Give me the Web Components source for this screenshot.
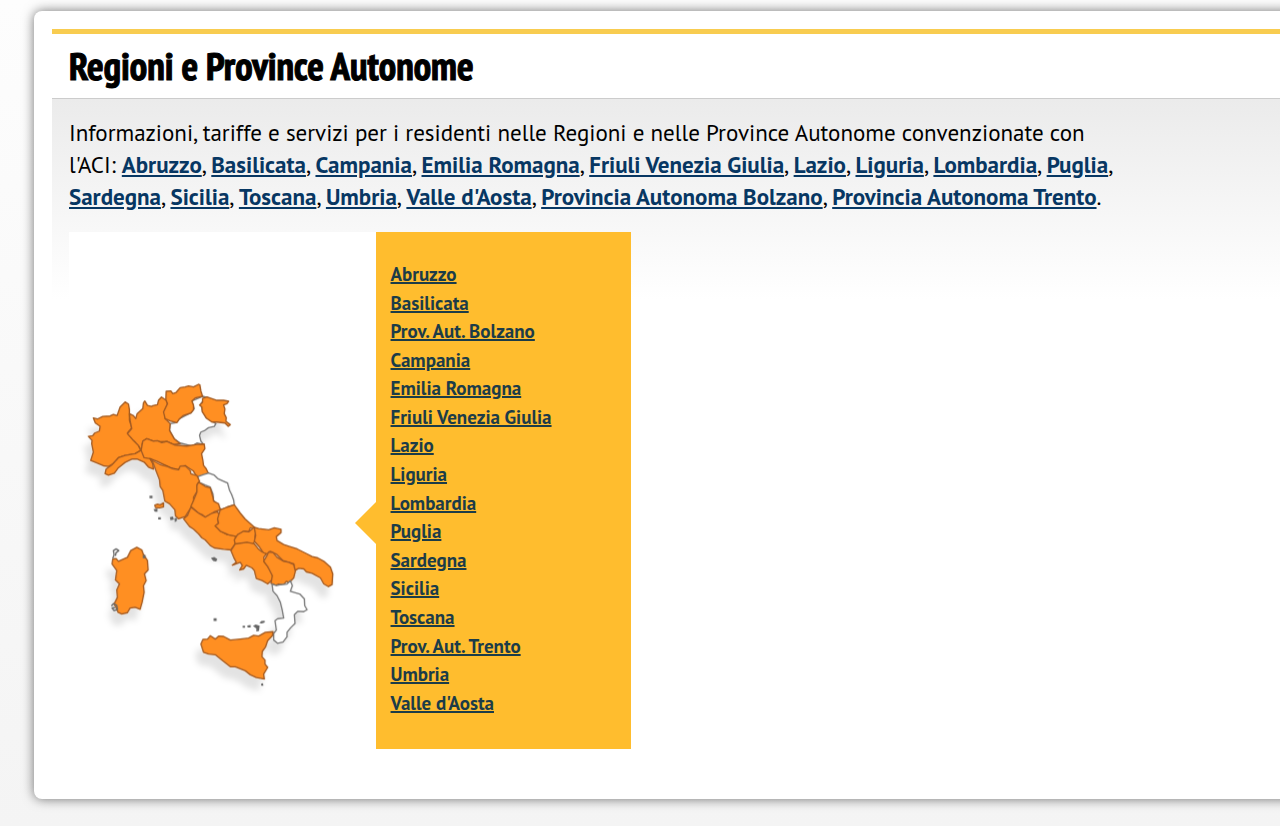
<!DOCTYPE html>
<html lang="it">
<head>
<meta charset="utf-8">
<title>Regioni e Province Autonome</title>
<style>
  html { min-height: 100%; background: linear-gradient(#fdfdfd, #f4f4f4); }
  body { margin: 0; overflow-x: hidden; font-family: "PT Sans", "Noto Sans", sans-serif; color: #000; }
</style>
</head>
<body>
<content-card>
  <section-heading slot="heading">Regioni e Province Autonome</section-heading>
  <regions-intro></regions-intro>
  <regions-map><italy-map slot="map"></italy-map><regions-list slot="list"></regions-list></regions-map>
</content-card>

<script>
  const define = (name, html, setup) => {
    const template = document.createElement('template');
    template.innerHTML = html;
    customElements.define(name, class extends HTMLElement {
      constructor() {
        super();
        const root = this.attachShadow({ mode: 'open' });
        root.append(template.content.cloneNode(true));
        if (setup) setup(root);
      }
    });
  };

  define('content-card', `
    <style>
      :host { display: block; margin: 11px -20px 27px 34px; padding: 18px 0 50px 18px; background: #fff;
        border-radius: 8px 0 0 8px; box-shadow: 0 0 12px rgba(0, 0, 0, .55); }
      .content { display: flex; flex-direction: column; gap: 19px; padding: 18px 17px 0;
        border-top: 1px solid #ccc; background: linear-gradient(#ebebeb, #fff 200px); }
    </style>
    <slot name="heading"></slot>
    <div class="content"><slot></slot></div>`);

  define('section-heading', `
    <style>
      :host { display: block; border-top: 5px solid #f8cc50; padding: 8px 17px; }
      h1 { margin: 0; font: bold 39px/48px "PT Sans Narrow", "Open Sans Condensed", sans-serif; -webkit-text-stroke: 1px #000; }
    </style>
    <h1><slot></slot></h1>`);

  define('regions-intro', `
    <style>
      :host { display: block; max-width: 1060px; }
      p { margin: 0; font-size: 23px; line-height: 32px; }
      a { color: #073763; font-weight: bold; }
    </style>
    <p>Informazioni, tariffe e servizi per i residenti nelle Regioni e nelle Province Autonome convenzionate con <span>l'ACI: </span><span class="links"></span></p>`,
    root => {
      const names = ['Abruzzo', 'Basilicata', 'Campania', 'Emilia Romagna', 'Friuli Venezia Giulia', 'Lazio', 'Liguria',
        'Lombardia', 'Puglia', 'Sardegna', 'Sicilia', 'Toscana', 'Umbria', "Valle d'Aosta",
        'Provincia Autonoma Bolzano', 'Provincia Autonoma Trento'];
      root.querySelector('.links').innerHTML = names.map(n => `<a href="#">${n}</a>`).join(', ') + '.';
    });

  define('regions-map', `
    <style>
      :host { display: grid; grid-template-columns: 6fr 5fr; max-width: 562px; background: #fff; }
      .panel { position: relative; display: grid; background: #ffbd2e; }
      .panel::before { content: ""; position: absolute; right: 100%; top: 270px;
        border: solid transparent; border-width: 21px 21px 21px 0; border-right-color: #ffbd2e; }
    </style>
    <slot name="map"></slot>
    <div class="panel"><slot name="list"></slot></div>`);

  define('regions-list', `
    <style>
      :host { display: grid; padding: 28px 15px 32px; }
      ul { display: flex; flex-direction: column; justify-content: space-between; margin: 0; padding: 0; list-style: none; }
      li { font-size: 19px; line-height: 28px; }
      a { color: #1c3c48; font-weight: bold; text-decoration-thickness: 2px; }
    </style>
    <ul></ul>`,
    root => {
      const names = ['Abruzzo', 'Basilicata', 'Prov. Aut. Bolzano', 'Campania', 'Emilia Romagna', 'Friuli Venezia Giulia',
        'Lazio', 'Liguria', 'Lombardia', 'Puglia', 'Sardegna', 'Sicilia', 'Toscana', 'Prov. Aut. Trento', 'Umbria',
        "Valle d'Aosta"];
      root.querySelector('ul').innerHTML = names.map(n => `<li><a href="#">${n}</a></li>`).join('');
    });

  define('italy-map', `
    <style>
      :host { display: block; }
      svg { display: block; width: 100%; height: auto; }
      path { fill: #ff8f22; stroke: #a35a20; stroke-width: 4; stroke-linejoin: round; }
      .free { fill: #fff; stroke: #777; }
      .coast { fill: none; stroke: #666; }
      .isle { fill: #666; stroke: none; }
    </style>
    <svg viewBox="69 232 306 516" role="img" aria-label="Mappa delle regioni italiane">
      <defs>
        <filter id="shade" x="-10%" y="-10%" width="120%" height="125%">
          <feDropShadow dx="-5" dy="11" stdDeviation="3" flood-color="#000" flood-opacity=".11"/>
        </filter>
      </defs>
      <g filter="url(#shade)">
        <!-- North -->
        <g transform="translate(70 370) scale(.3333)">
          <path class="free" d="M397 78 L413 82 400 90 392 100 397 122 408 142 428 154 437 160 432 168 415 172 404 180 392 185 388 195 392 212 400 222 380 218 365 227 350 223 330 218 312 205 298 180 300 160 318 157 328 145 345 136 362 128 372 115 365 92Z"/>
          <path d="M70 143 L82 146 98 138 120 137 130 132 141 136 150 110 165 95 175 101 178 118 178 150 185 172 172 188 190 210 205 225 212 240 195 250 165 255 145 262 130 280 115 288 100 286 75 275 62 270 70 245 65 220 66 210 55 198 68 196 74 188 88 182 90 168 76 158Z"/>
          <path d="M212 240 L225 252 240 265 248 280 250 296 235 290 222 275 202 266 185 266 165 276 145 292 133 308 115 314 105 310 108 296 125 284 145 262 165 255 195 250Z"/>
          <path d="M178 130 L190 136 197 145 201 130 218 115 220 98 224 92 232 105 244 108 248 106 262 103 265 90 274 80 288 90 292 100 285 120 285 145 300 160 298 180 312 205 330 220 310 222 290 213 270 214 250 212 230 205 218 212 213 240 205 225 190 210 172 190 185 175 180 150Z"/>
          <path d="M288 63 L302 62 308 70 318 66 330 52 345 50 355 47 370 50 385 42 389 44 392 62 397 78 375 83 365 92 370 105 370 118 362 128 340 135 328 145 320 157 300 152 285 145 280 125 292 100 287 88Z"/>
          <path d="M397 84 L410 80 440 90 460 90 475 93 470 100 460 104 464 116 462 130 468 142 467 153 480 163 474 168 464 158 440 155 425 155 408 143 396 124 395 110 388 104 397 96Z"/>
          <path d="M218 212 L230 205 250 212 262 211 275 217 290 213 315 224 350 227 380 222 402 221 404 235 394 250 398 270 400 285 408 295 415 310 398 318 380 320 370 302 345 286 325 298 300 292 280 282 260 272 240 265 222 262 213 240Z"/>
        </g>
        <!-- Centre and south -->
        <g transform="translate(130 450) scale(.3333)">
          <path class="free" d="M203 78 L220 72 235 68 252 74 262 84 275 90 292 98 298 120 304 132 310 148 312 163 290 170 272 178 262 162 250 150 248 130 240 110 225 104 205 95Z"/>
          <path d="M68 35 L60 25 90 42 112 48 128 55 145 58 150 47 165 46 180 60 182 70 200 75 208 92 200 103 202 120 190 140 190 152 182 172 165 198 145 205 136 196 134 178 118 160 104 152 98 120 90 108 88 88 78 62Z"/>
          <path d="M205 95 L225 108 240 112 248 140 250 152 265 160 270 178 252 184 245 190 225 200 215 192 205 188 182 168 190 150 200 125 200 105Z"/>
          <path d="M182 170 L205 188 225 200 245 188 262 184 268 195 262 208 265 218 255 226 270 240 290 252 315 256 318 275 302 298 280 296 252 292 240 285 225 268 215 262 205 250 190 236 178 228 160 205 172 195Z"/>
          <path d="M270 178 L290 170 312 163 330 188 345 206 372 230 360 232 355 244 340 242 320 258 295 253 270 242 255 226 265 218 262 205Z"/>
          <path d="M372 230 L380 240 374 255 374 272 366 282 350 276 315 282 312 268 322 252 340 242 355 244Z"/>
          <path d="M372 230 L385 234 415 238 432 232 452 236 452 246 438 258 440 270 460 282 478 288 500 295 530 310 545 318 562 322 580 332 600 350 607 370 605 402 594 408 580 400 570 382 545 368 528 364 520 355 505 353 494 360 490 340 475 335 458 330 440 312 420 302 410 310 400 308 388 290 372 272 376 255Z"/>
          <path d="M302 300 L315 280 350 275 372 280 385 296 395 304 408 310 400 320 402 334 410 345 425 365 428 385 412 400 395 390 378 384 372 360 365 352 348 344 340 355 328 358 336 345 330 335 306 344 318 335 312 324Z"/>
          <path d="M410 315 L415 304 428 306 440 320 460 332 475 335 490 342 495 362 490 382 476 396 468 392 458 404 445 400 436 404 422 398 426 375 412 348 400 332Z"/>
        </g>
        <!-- Calabria and the islands -->
        <g transform="translate(90 530) scale(.3333)">
          <path class="free" d="M545 160 L558 165 572 162 590 160 600 150 606 165 600 182 628 190 642 205 643 225 650 237 640 243 622 242 612 252 614 278 600 292 590 305 590 318 578 334 562 338 550 328 550 308 558 298 554 270 562 264 580 262 576 240 570 215 560 195 548 182Z"/>
          <path d="M332 340 L338 326 352 325 360 315 375 325 385 316 400 317 420 328 450 325 475 322 490 314 505 316 525 305 548 303 546 315 532 330 526 348 516 362 515 378 524 388 524 400 532 410 520 430 522 445 498 440 480 432 465 420 435 408 420 408 400 392 375 372 355 370 340 365Z"/>
          <path d="M68 85 L78 84 85 92 112 80 122 60 140 50 155 58 160 72 172 90 174 118 163 130 168 150 160 165 162 185 156 215 150 236 135 230 120 232 112 246 95 250 84 245 78 230 72 220 82 200 80 178 88 160 76 148 80 120 66 100Z"/>
        </g>
      </g>
      <g transform="translate(130 450) scale(.3333)">
        <path class="isle" d="M58 136h9v7h-9z M70 176l12-2v10h-8z M84 200h8v7h-8z M119 200l9-2 3 9-10 2z M133 204l7-3v10l-6 4z M242 322l10-3 9 6-3 8-9-2z"/>
        <path d="M74 164l8-3 8 2 10-6v12l-12 3-12-1z"/>
      </g>
      <g transform="translate(90 530) scale(.3333)">
        <path class="isle" d="M370 263h9v8h-9z M457 285h7v6h-7z M471 284l10-1v7h-9z M488 286l8-5 12 4-2 16-8 1v-9z M507 277l6-6 10-1v5l-9 3z M512 459l6-2 1 8h-6z M158 73h8v10h-8z"/>
        <path class="coast" d="M68 84 L72 72 70 60 78 55 86 60 78 66 76 76 M64 226 L70 219 80 224 82 236 72 240 66 232 76 230"/>
      </g>
    </svg>`);
</script>
</body>
</html>
